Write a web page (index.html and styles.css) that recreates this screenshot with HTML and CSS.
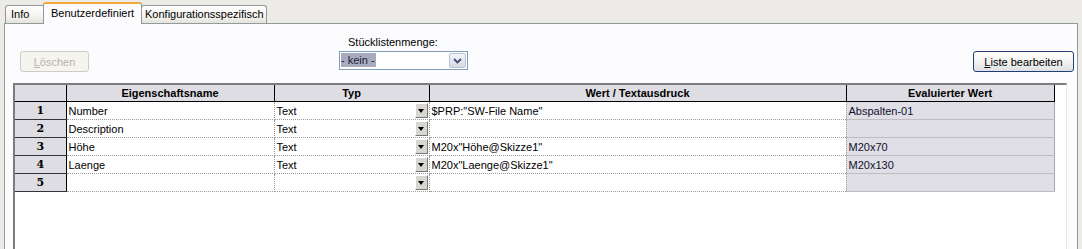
FILE: index.html
```html
<!DOCTYPE html>
<html>
<head>
  <title>Eigenschaften</title>
  <link rel="stylesheet" href="styles.css">
</head>
<body>
  <div class="tabs">
    <div class="tab tab-info">Info</div>
    <div class="tab active">Benutzerdefiniert</div>
    <div class="tab tab-conf">Konfigurationsspezifisch</div>
  </div>
  <div class="panel">
    <div class="toolbar">
      <button class="btn btn-disabled" disabled><u>L</u>öschen</button>
      <div class="bom">
        <label for="bom">Stücklistenmenge:</label>
        <div class="combo" id="bom">
          <span class="combo-text"><span class="sel">- kein -</span></span>
          <span class="combo-btn">
            <svg width="9" height="6" viewBox="0 0 9 6"><path d="M1 1 L4.5 4.5 L8 1" fill="none" stroke="#3d4f73" stroke-width="1.8"/></svg>
          </span>
        </div>
      </div>
      <button class="btn btn-xp"><u>L</u>iste bearbeiten</button>
    </div>

    <div class="grid-frame">
      <table class="grid">
        <colgroup>
          <col style="width:51px">
          <col style="width:208px">
          <col style="width:155px">
          <col style="width:417px">
          <col style="width:208px">
        </colgroup>
        <thead>
          <tr>
            <th class="corner"></th>
            <th>Eigenschaftsname</th>
            <th>Typ</th>
            <th>Wert / Textausdruck</th>
            <th>Evaluierter Wert</th>
          </tr>
        </thead>
        <tbody>
          <tr>
            <td class="rowhead">1</td>
            <td>Number</td>
            <td class="typ">Text<span class="drop"></span></td>
            <td>$PRP:"SW-File Name"</td>
            <td class="eval">Abspalten-01</td>
          </tr>
          <tr>
            <td class="rowhead">2</td>
            <td>Description</td>
            <td class="typ">Text<span class="drop"></span></td>
            <td></td>
            <td class="eval"></td>
          </tr>
          <tr>
            <td class="rowhead">3</td>
            <td>Höhe</td>
            <td class="typ">Text<span class="drop"></span></td>
            <td>M20x"Höhe@Skizze1"</td>
            <td class="eval">M20x70</td>
          </tr>
          <tr>
            <td class="rowhead">4</td>
            <td>Laenge</td>
            <td class="typ">Text<span class="drop"></span></td>
            <td>M20x"Laenge@Skizze1"</td>
            <td class="eval">M20x130</td>
          </tr>
          <tr>
            <td class="rowhead">5</td>
            <td></td>
            <td class="typ"><span class="drop"></span></td>
            <td></td>
            <td class="eval"></td>
          </tr>
        </tbody>
      </table>
    </div>
  </div>
</body>
</html>
```

FILE: styles.css
```css
body {
  margin: 0;
  background-color: #ecebe7;
  font-family: "Liberation Sans", Arial, sans-serif;
  font-size: 11px;
  color: #000;
  overflow: hidden;
}

.tabs {
  display: flex;
  align-items: flex-end;
  height: 23px;
  padding-left: 5px;
}

.tab {
  height: 18px;
  line-height: 17px;
  padding: 0 4px;
  border: 1px solid #919b9c;
  border-bottom: none;
  border-radius: 3px 3px 0 0;
  background: linear-gradient(#fefefe, #f4f3ee 60%, #e3e2dc);
  margin-right: -1px;
  box-sizing: border-box;
  white-space: nowrap;
}

.tab-info {
  width: 40px;
  padding-left: 5px;
}

.tab-conf {
  padding: 0 2px 0 3px;
}

.tab.active {
  position: relative;
  z-index: 1;
  width: 99px;
  height: 22px;
  line-height: 19px;
  padding: 0 7px;
  margin-left: -1px;
  margin-bottom: -1px;
  border-top: 2px solid #f3a83a;
  background: #fcfcfe;
}

.panel {
  margin: 0 4px;
  height: 225px;
  border: 1px solid #919b9c;
  background-color: #fcfcfe;
}

.toolbar {
  display: flex;
  align-items: flex-end;
  padding: 13px 3px 0 15px;
  height: 35px;
}

.btn {
  height: 21px;
  font-family: inherit;
  font-size: 11px;
  padding: 0;
  border-radius: 3px;
}

.btn-disabled {
  width: 69px;
  color: #b5b2a4;
  background-color: #f5f4ef;
  border: 1px solid #cfcdc2;
}

.btn-xp {
  width: 101px;
  margin-left: auto;
  color: #000;
  border: 1px solid #1f3f74;
  background: linear-gradient(#ffffff, #f3f3f0 50%, #dfe0e6);
}

.bom {
  margin-left: 250px;
  display: flex;
  flex-direction: column;
}

.bom label {
  padding-left: 9px;
  margin-bottom: 3px;
}

.combo {
  display: flex;
  width: 127px;
  height: 17px;
  border: 1px solid #7f9db9;
  background-color: #fff;
  margin-bottom: 2px;
}

.combo-text {
  flex: 1;
  padding: 1px 0 0 1px;
}

.sel {
  display: inline-block;
  height: 14px;
  line-height: 14px;
  padding-right: 1px;
  background-color: #a7abbd;
  color: #1c1c3a;
}

.combo-btn {
  width: 15px;
  margin: 1px;
  border: 1px solid #b9c2d6;
  border-radius: 2px;
  background: linear-gradient(#f4f5f8, #d6d9e2);
  display: flex;
  align-items: center;
  justify-content: center;
}

.grid-frame {
  margin: 11px 10px 0 8px;
  height: 164px;
  border-top: 2px solid #7d7d7d;
  border-left: 2px solid #7d7d7d;
  border-right: 1px solid #e8e8e8;
  background-color: #fff;
}

.grid {
  border-collapse: collapse;
  table-layout: fixed;
  width: 1039px;
}

.grid th {
  height: 16px;
  padding: 0;
  background-color: #dedde3;
  border-right: 1px solid #000;
  border-bottom: 1px solid #000;
  font-weight: bold;
  text-align: center;
}

.grid td {
  height: 17px;
  padding: 0 0 0 2px;
  border-right: 1px dotted #9c9c9c;
  border-bottom: 1px dotted #9c9c9c;
  white-space: nowrap;
  vertical-align: middle;
}

.grid td.rowhead {
  padding: 0;
  text-align: center;
  font-weight: bold;
  font-family: "DejaVu Serif", serif;
  font-size: 11px;
  background-color: #dedde3;
  border-right: 1px solid #000;
  border-bottom: 1px solid #333;
}

.grid td.typ {
  position: relative;
}

.drop {
  position: absolute;
  right: 1px;
  top: 1px;
  width: 11px;
  height: 13px;
  background-color: #d8d6d0;
  border: 1px solid;
  border-color: #fff #777 #777 #fff;
}

.drop::after {
  content: "";
  position: absolute;
  left: 2px;
  top: 5px;
  border-left: 3.5px solid transparent;
  border-right: 3.5px solid transparent;
  border-top: 4px solid #000;
}

.grid td.eval {
  background-color: #dfdfe5;
  color: #101030;
  border-right: 1px solid #a6a6a6;
  border-bottom: 1px solid #bdbdc3;
}
```
